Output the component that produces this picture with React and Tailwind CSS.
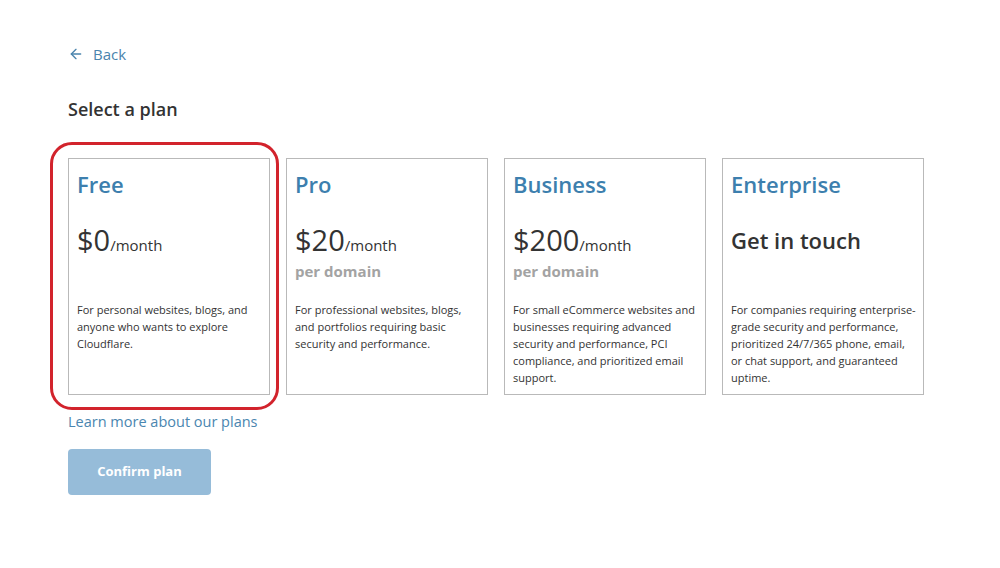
import React from "react";
import { ArrowLeft } from "lucide-react";

// line breaks follow the reference wrapping
const plans = [
  {
    name: "Free",
    price: "$0",
    perDomain: false,
    text: "For personal websites, blogs, and\nanyone who wants to explore\nCloudflare.",
    selected: true,
  },
  {
    name: "Pro",
    price: "$20",
    perDomain: true,
    text: "For professional websites, blogs,\nand portfolios requiring basic\nsecurity and performance.",
  },
  {
    name: "Business",
    price: "$200",
    perDomain: true,
    text: "For small eCommerce websites and\nbusinesses requiring advanced\nsecurity and performance, PCI\ncompliance, and prioritized email\nsupport.",
  },
  {
    name: "Enterprise",
    contact: true,
    text: "For companies requiring enterprise-\ngrade security and performance,\nprioritized 24/7/365 phone, email,\nor chat support, and guaranteed\nuptime.",
  },
];

function PlanCard({ plan }) {
  return (
    <div className="relative">
      {plan.selected && (
        <div className="absolute -left-[18px] -top-[16px] -right-[9px] -bottom-[15px] rounded-[22px] border-[3px] border-[#d2232c] pointer-events-none" />
      )}
      <div className="h-[237px] border border-[#b9b9b9] bg-white pl-[8px] pr-[2px] pt-[12px]">
        <h3 className="text-[22px] leading-[26px] font-semibold text-[#3d7fae]">{plan.name}</h3>
        <div className="h-[79px] mt-[25px]">
          {plan.contact ? (
            <div className="text-[22px] leading-[36px] font-semibold text-[#333]">Get in touch</div>
          ) : (
            <>
              <div className="leading-[36px] text-[#333]">
                <span className="text-[29px]">{plan.price}</span>
                <span className="text-[15px] font-medium">/month</span>
              </div>
              {plan.perDomain && (
                <div className="-mt-[3px] text-[15px] leading-[22px] font-bold text-[#a3a3a3]">per domain</div>
              )}
            </>
          )}
        </div>
        <p className="whitespace-pre-line text-[11px] leading-[17px] text-[#333]">{plan.text}</p>
      </div>
    </div>
  );
}

export default function App() {
  return (
    <div
      className="w-[1000px] h-[568px] bg-white px-[68px] pt-[44px]"
      style={{ fontFamily: '"Open Sans", "Noto Sans", sans-serif' }}
    >
      <a href="#" className="flex items-center gap-[9px] h-[20px] text-[15px] text-[#4a84ad]">
        <ArrowLeft className="w-[16px] h-[16px]" strokeWidth={2} />
        <span>Back</span>
      </a>

      <h1 className="mt-[33px] text-[18px] leading-[24px] font-semibold text-[#333]">Select a plan</h1>

      <div className="mt-[37px] grid grid-cols-4 gap-[16px] w-[856px]">
        {plans.map((p) => (
          <PlanCard key={p.name} plan={p} />
        ))}
      </div>

      <a href="#" className="block mt-[17px] text-[14.5px] leading-[20px] text-[#4a86b0]">
        Learn more about our plans
      </a>

      <button
        disabled
        className="mt-[17px] w-[143px] h-[46px] rounded-[4px] bg-[#96bcd9] text-white text-[13px] font-bold"
      >
        Confirm plan
      </button>
    </div>
  );
}
